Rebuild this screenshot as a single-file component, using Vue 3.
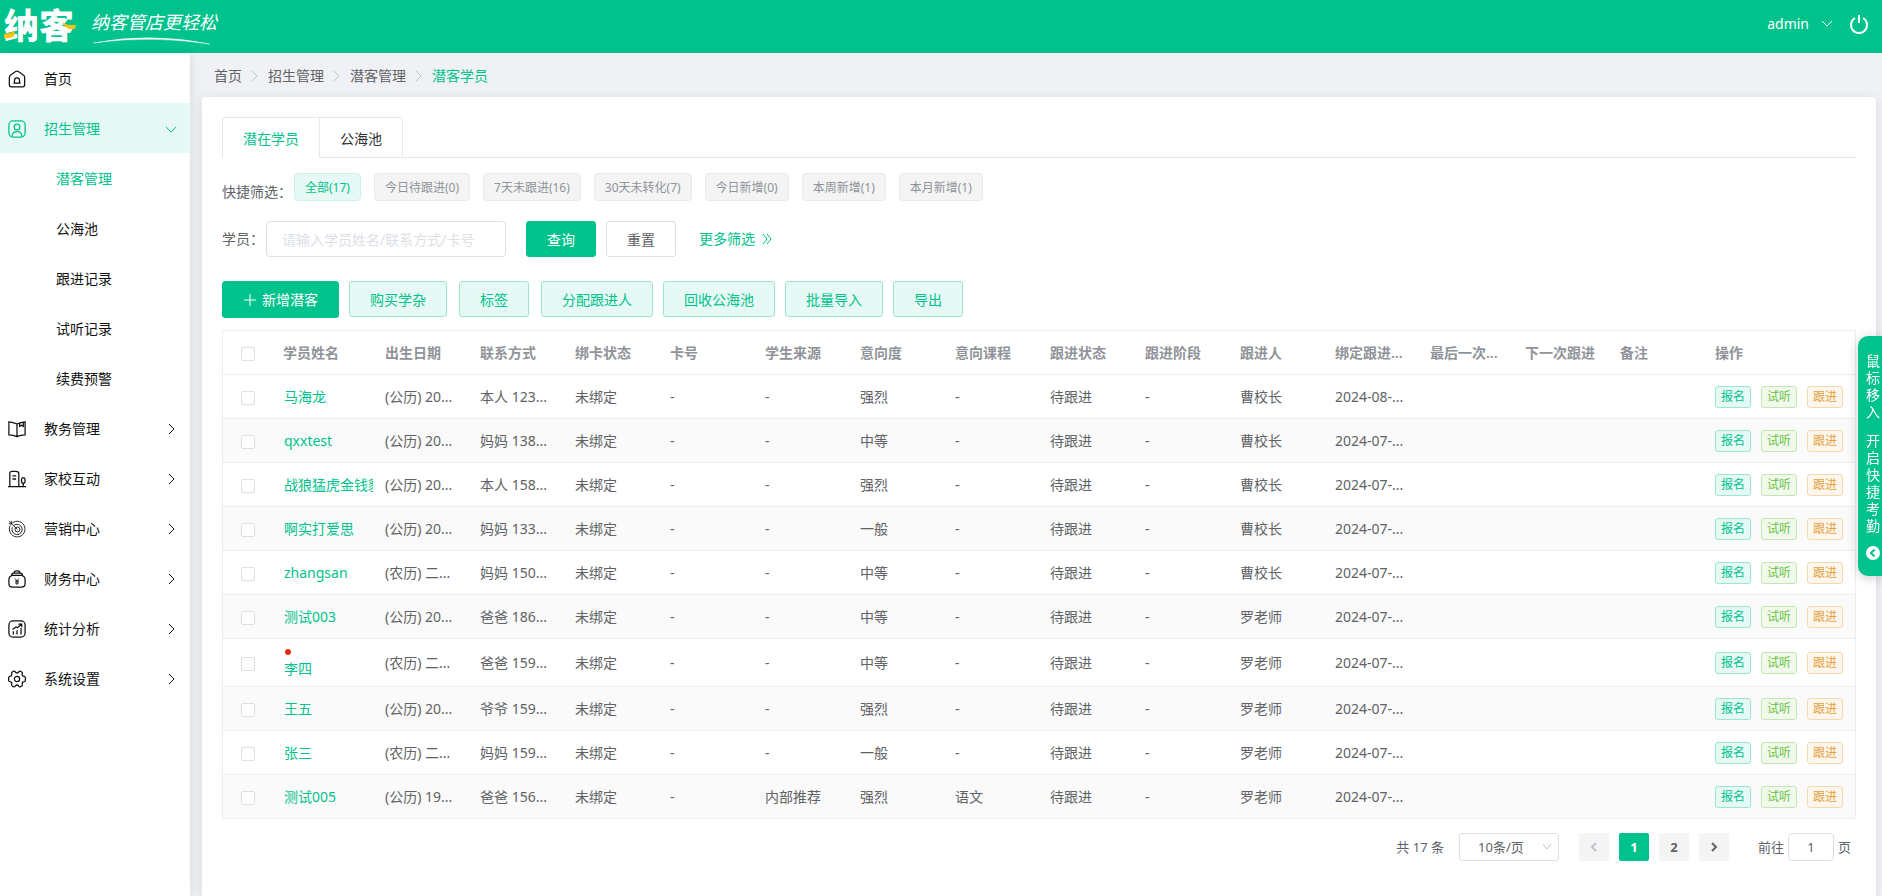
<script setup>
import { ref } from 'vue'

const subMenu = ['潜客管理', '公海池', '跟进记录', '试听记录', '续费预警']
const menu = [
  { label: '教务管理', icon: 'book' },
  { label: '家校互动', icon: 'school' },
  { label: '营销中心', icon: 'target' },
  { label: '财务中心', icon: 'finance' },
  { label: '统计分析', icon: 'chart' },
  { label: '系统设置', icon: 'gear' },
]
const crumbs = ['首页', '招生管理', '潜客管理', '潜客学员']
const quick = ['全部(17)', '今日待跟进(0)', '7天未跟进(16)', '30天未转化(7)', '今日新增(0)', '本周新增(1)', '本月新增(1)']
const activeQuick = ref(0)
const keyword = ref('')
const pageSize = ref('10条/页')
const jump = ref('1')

const heads = ['学员姓名', '出生日期', '联系方式', '绑卡状态', '卡号', '学生来源', '意向度', '意向课程', '跟进状态', '跟进阶段', '跟进人', '绑定跟进...', '最后一次...', '下一次跟进', '备注', '操作']
const make = (name, birth, contact, level, owner, date, extra = {}) => ({
  name, dot: extra.dot,
  cells: [birth, contact, '未绑定', '-', extra.source || '-', level, extra.course || '-', '待跟进', '-', owner, date, '', '', ''],
})
const rows = [
  make('马海龙', '(公历) 20...', '本人 123...', '强烈', '曹校长', '2024-08-...'),
  make('qxxtest', '(公历) 20...', '妈妈 138...', '中等', '曹校长', '2024-07-...'),
  make('战狼猛虎金钱豹', '(公历) 20...', '本人 158...', '强烈', '曹校长', '2024-07-...'),
  make('啊实打爱思', '(公历) 20...', '妈妈 133...', '一般', '曹校长', '2024-07-...'),
  make('zhangsan', '(农历) 二...', '妈妈 150...', '中等', '曹校长', '2024-07-...'),
  make('测试003', '(公历) 20...', '爸爸 186...', '中等', '罗老师', '2024-07-...'),
  make('李四', '(农历) 二...', '爸爸 159...', '中等', '罗老师', '2024-07-...', { dot: true }),
  make('王五', '(公历) 20...', '爷爷 159...', '强烈', '罗老师', '2024-07-...'),
  make('张三', '(农历) 二...', '妈妈 159...', '一般', '罗老师', '2024-07-...'),
  make('测试005', '(公历) 19...', '爸爸 156...', '强烈', '罗老师', '2024-07-...', { source: '内部推荐', course: '语文' }),
]
</script>

<template>
  <div class="app">
    <header class="top">
      <a class="logo" href="#">
        <span class="brand">纳客
          <svg class="accents" viewBox="0 0 72 30"><path d="M0 24q5 0 11-3l-1 5q-4 3-10 2z" /><path d="M58 12l6 3h8l-1 4h-6q-3-1-7-7z" /></svg>
        </span>
        <span class="slogan">纳客管店更轻松
          <svg class="swoosh" viewBox="0 0 118 8"><path d="M0 6Q58-5 117 7Q58-2 0 6z" /></svg>
        </span>
      </a>
      <div class="user">
        <button class="account">admin
          <svg width="12" height="8" viewBox="0 0 12 8"><path d="M1 1l5 5 5-5" /></svg>
        </button>
        <button class="power" aria-label="退出">
          <svg width="20" height="20" viewBox="0 0 20 20"><path d="M6 4a8 8 0 1 0 8 0M10 1v8" /></svg>
        </button>
      </div>
    </header>

    <div class="body">
      <aside class="side">
        <a class="item" href="#">
          <svg class="ico" viewBox="0 0 20 20"><path d="M1.500 8.200Q1.500 6.500 3 5.500L8.500 1.600Q10 .7 11.500 1.600L17 5.500Q18.500 6.500 18.500 8.200V16.500Q18.500 18.700 16.300 18.700H3.700Q1.500 18.700 1.500 16.500zM7.200 14.500V11.500a2.800 2.800 0 0 1 5.600 0V14.500zM6 14.500h8" /></svg>
          <span>首页</span>
        </a>
        <a class="item open" href="#">
          <svg class="ico" viewBox="0 0 20 20"><rect x="1" y="1" width="18" height="18" rx="4.500" /><circle cx="10" cy="7.800" r="3.200" /><path d="M4.500 18.500q0-5.500 5.500-5.500t5.500 5.500" /></svg>
          <span>招生管理</span>
          <svg class="arrow" viewBox="0 0 12 12"><path d="M1 4l5 5 5-5" /></svg>
        </a>
        <a v-for="(s, i) in subMenu" :key="s" class="item sub" :class="{ current: i === 0 }" href="#">{{ s }}</a>
        <a v-for="m in menu" :key="m.label" class="item" href="#">
          <svg class="ico" viewBox="0 0 20 20">
            <path v-if="m.icon === 'book'" d="M10 18.500V4.500Q6 2.200 1 2V16.500Q6 16.500 10 18.500Q14 16.500 19 16.500V2Q14 2.200 10 4.500M13 3v4l2-1.300L17 7V2.300" />
            <path v-else-if="m.icon === 'school'" d="M0 18.500h20M2 18.500V4q0-2.500 2.500-2.500H9Q12 1.500 12 4V18.500M5 6.500h4M5 10h4M17 18.500V15M17 8.500q2 0 2 3.200T17 15q-2 0-2-3.300T17 8.500z" />
            <g v-else-if="m.icon === 'target'" class="thin"><path d="M4.500 3.500A8.700 8.700 0 1 1 2.500 6M6.500 6A5.700 5.700 0 1 1 4.900 8M1 1.500l9.500 9M1 4l3 .5L3.500 1" /><circle cx="10.500" cy="10.500" r="2.700" /></g>
            <g v-else-if="m.icon === 'finance'"><path d="M5 6H15Q19 7 19 11V15q0 4-4 4H5q-4 0-4-4V11Q1 7 5 6zM4 6q0-2.600 2-2.600h8q2 0 2 2.600M7 3.400Q7 1 9 1h2q2 0 2 2.400" /><path class="thin" d="M7.800 9.500L10 12.200l2.200-2.700M10 12.200V16.500M7.800 12.500h4.400M7.800 14.500h4.400" /></g>
            <g v-else-if="m.icon === 'chart'"><rect x="1" y="1" width="18" height="18" rx="4.500" /><path d="M6 16v-3.500M10 16v-4.500M14.500 16V9M5 10.500l4-2.700 1.500.7L15 4.800M11.500 4.500H15.200V8" /></g>
            <g v-else><path d="M6.500 1.200Q8 1 8.300 2.500Q10 4.200 11.700 2.500Q12 1 13.500 1.200L15.600 2.500Q16.500 3.300 15.700 4.800Q15.800 7.200 18 7.200Q19.300 7.500 19.300 8.700V11.300Q19.300 12.500 18 12.800Q15.800 12.800 15.700 15.200Q16.500 16.700 15.600 17.500L13.500 18.800Q12 19 11.700 17.500Q10 15.800 8.300 17.500Q8 19 6.500 18.800L4.400 17.500Q3.500 16.700 4.300 15.200Q4.200 12.800 2 12.800Q.7 12.500 .7 11.300V8.700Q.7 7.500 2 7.200Q4.200 7.200 4.300 4.800Q3.500 3.300 4.400 2.500z" /><circle cx="10" cy="10" r="2.900" /></g>
          </svg>
          <span>{{ m.label }}</span>
          <svg class="arrow" viewBox="0 0 12 12"><path d="M4 1l5 5-5 5" /></svg>
        </a>
      </aside>

      <main class="main">
        <nav class="crumbs">
          <template v-for="(c, i) in crumbs" :key="c">
            <svg v-if="i" class="sep" viewBox="0 0 8 12"><path d="M1 1l5 5-5 5" /></svg>
            <a href="#" :class="{ current: i === 3 }">{{ c }}</a>
          </template>
        </nav>

        <section class="card">
          <div class="tabs">
            <button class="tab active">潜在学员</button>
            <button class="tab">公海池</button>
          </div>

          <div class="quick">
            <span class="quick-label">快捷筛选：</span>
            <div class="quick-list">
              <button v-for="(q, i) in quick" :key="q" class="chip" :class="{ on: i === activeQuick }" @click="activeQuick = i">{{ q }}</button>
            </div>
          </div>

          <form class="search" @submit.prevent>
            <label for="kw">学员：</label>
            <input id="kw" v-model="keyword" class="text" placeholder="请输入学员姓名/联系方式/卡号" />
            <button class="btn primary">查询</button>
            <button class="btn" type="reset">重置</button>
            <a class="more" href="#">更多筛选
              <svg width="10" height="12" viewBox="0 0 10 12"><path d="M1 1l4 5-4 5M5 1l4 5-4 5" /></svg>
            </a>
          </form>

          <div class="actions">
            <button class="btn primary add"><svg width="12" height="12" viewBox="0 0 12 12"><path d="M6 0v12M0 6h12" /></svg>新增潜客</button>
            <button class="btn plain">购买学杂</button>
            <span class="group">
              <button class="btn plain">标签</button>
            </span>
            <button class="btn plain">分配跟进人</button>
            <button class="btn plain">回收公海池</button>
            <button class="btn plain">批量导入</button>
            <button class="btn plain">导出</button>
          </div>

          <table class="grid">
            <colgroup>
              <col class="c-check" /><col class="c-name" />
              <col v-for="n in 14" :key="n" />
              <col class="c-ops" />
            </colgroup>
            <thead>
              <tr>
                <th class="check"><input type="checkbox" aria-label="全选" /></th>
                <th v-for="h in heads" :key="h">{{ h }}</th>
              </tr>
            </thead>
            <tbody>
              <tr v-for="r in rows" :key="r.name">
                <td class="check"><input type="checkbox" :aria-label="r.name" /></td>
                <td class="name"><i v-if="r.dot" class="dot"></i><a href="#">{{ r.name }}</a></td>
                <td v-for="(c, i) in r.cells" :key="i">{{ c }}</td>
                <td>
                  <div class="ops">
                    <button class="tag green">报名</button>
                    <button class="tag lime">试听</button>
                    <button class="tag amber">跟进</button>
                  </div>
                </td>
              </tr>
            </tbody>
          </table>

          <div class="pager">
            <span class="total">共 17 条</span>
            <span class="size">
              <select v-model="pageSize" aria-label="每页条数"><option>10条/页</option></select>
              <svg width="10" height="8" viewBox="0 0 10 8"><path d="M1 1l4 5 4-5" /></svg>
            </span>
            <button class="pg" disabled aria-label="上一页"><svg width="8" height="12" viewBox="0 0 8 12"><path d="M6 2L2 6l4 4" /></svg></button>
            <button class="pg now">1</button>
            <button class="pg">2</button>
            <button class="pg" aria-label="下一页"><svg width="8" height="12" viewBox="0 0 8 12"><path d="M2 2l4 4-4 4" /></svg></button>
            <label class="jump">前往<input v-model="jump" />页</label>
          </div>
        </section>
      </main>
    </div>

    <button class="dock">
      <span>鼠标移入</span>
      <span>开启快捷考勤</span>
      <svg width="14" height="14" viewBox="0 0 14 14"><circle cx="7" cy="7" r="7" /><path d="M8.500 3.500L5 7l3.500 3.500" /></svg>
    </button>
  </div>
</template>

<style>
body {
  margin: 0;
  background: #f0f1f5;
}
</style>

<style scoped>
.app {
  min-height: 100vh;
  display: flex;
  flex-direction: column;
  font: 14px/20px "Noto Sans", "Noto Sans CJK SC", sans-serif;
  color: #606266;
}
* { box-sizing: border-box; }
a { color: inherit; text-decoration: none; }
button, input, select { font: inherit; color: inherit; margin: 0; }
button { cursor: pointer; border: 0; background: none; padding: 0; white-space: nowrap; }
svg { fill: none; stroke: currentColor; flex: none; }

.top {
  height: 53px;
  display: flex;
  align-items: center;
  justify-content: space-between;
  padding: 0 13px 5px 4px;
  background: #00c28c;
  color: #fff;
}
.logo { display: flex; align-items: center; gap: 15px; }
.brand {
  position: relative;
  font: 900 35px/46px "Noto Sans CJK SC", sans-serif;
  padding-right: 2px;
}
.accents { position: absolute; left: 0; top: 9px; width: 72px; height: 30px; fill: #fdc30c; stroke: none; }
.slogan {
  position: relative;
  font: italic 400 18px/26px "Noto Sans CJK SC", sans-serif;
  padding-bottom: 6px;
}
.swoosh { position: absolute; left: 2px; bottom: -5px; width: 118px; height: 8px; fill: #fff; stroke: #fff; stroke-width: 0.4; }
.user { display: flex; align-items: center; gap: 16px; }
.account { display: flex; align-items: center; gap: 12px; height: 24px; }
.power { display: flex; }
.power svg { stroke-width: 2; }

.body { flex: 1; display: flex; }
.side {
  flex: none;
  width: 190px;
  background: #fff;
  box-shadow: 2px 0 8px rgba(0, 0, 0, 0.08);
  color: #111;
}
.item {
  display: flex;
  align-items: center;
  height: 50px;
  padding: 2px 13px 0 8px;
}
.item .ico { width: 18px; height: 18px; margin-right: 18px; stroke-width: 1.4; }
.item .thin { stroke-width: 1; }
.item .arrow { width: 12px; height: 12px; margin-left: auto; }
.item.open { background: #e6f9f4; color: #00c28c; }
.item.sub { padding-left: 56px; }
.item.sub.current { color: #00c28c; }

.main {
  flex: 1;
  min-width: 0;
  display: flex;
  flex-direction: column;
  padding: 0 6px 0 12px;
}
.crumbs {
  display: flex;
  align-items: center;
  height: 44px;
  padding: 2px 12px 0;
}
.crumbs .sep { width: 8px; height: 12px; margin: 0 9px; color: #c0c4cc; }
.crumbs .current { color: #00c28c; }

.card {
  flex: 1;
  padding: 20px 20px 34px;
  background: #fff;
  border-radius: 4px 4px 0 0;
  box-shadow: 0 2px 12px rgba(0, 0, 0, 0.1);
}
.tabs { display: flex; border-bottom: 1px solid #e4e7ed; }
.tab {
  height: 40px;
  padding: 2px 20px 0;
  border-top: 1px solid #e4e7ed;
  border-right: 1px solid #e4e7ed;
  border-top-right-radius: 4px;
  color: #303133;
}
.tab.active {
  border-left: 1px solid #e4e7ed;
  border-radius: 4px 0 0 0;
  margin-bottom: -1px;
  height: 41px;
  background: #fff;
  color: #00c28c;
}

.quick { display: flex; margin-top: 15px; }
.quick-label { padding-top: 9px; width: 72px; }
.quick-list { display: flex; flex-wrap: wrap; gap: 13px; height: 28px; }
.chip {
  height: 28px;
  padding: 1px 10px 0;
  border: 1px solid #e9e9eb;
  border-radius: 4px;
  background: #f4f4f5;
  color: #909399;
  font-size: 12px;
}
.chip.on { background: #e6f9f4; border-color: #ccf3e8; color: #00c28c; }

.search { display: flex; align-items: center; margin-top: 19px; }
.search label { width: 44px; }
.text {
  width: 240px;
  height: 36px;
  margin-right: 20px;
  padding: 0 15px;
  border: 1px solid #dcdfe6;
  border-radius: 4px;
  background: #fff;
  outline: 0;
}
.text::placeholder { color: #dcdfe6; opacity: 1; }
.btn {
  height: 36px;
  padding: 1px 20px 0;
  border: 1px solid #dcdfe6;
  border-radius: 3px;
  background: #fff;
}
.btn.primary { background: #00c28c; border-color: #00c28c; color: #fff; }
.btn.plain { background: #e6f9f4; border-color: #99e7d1; color: #00c28c; }
.search .btn { margin-right: 10px; }
.more { display: flex; align-items: center; gap: 7px; margin-left: 13px; color: #00c28c; }

.actions { display: flex; gap: 10px; margin-top: 24px; }
.actions .add { display: flex; align-items: center; gap: 6px; height: 37px; padding-left: 21px; }
.group { padding: 0 2px; }

.grid {
  width: 100%;
  margin-top: 12px;
  table-layout: fixed;
  border-collapse: separate;
  border-spacing: 0;
  border: 1px solid #ebeef5;
  border-bottom: 0;
}
.c-check { width: 50px; }
.c-name { width: 102px; }
.c-ops { width: 150px; }
th, td {
  height: 44px;
  padding: 7px 0 7px 10px;
  border-bottom: 1px solid #ebeef5;
  text-align: left;
  white-space: nowrap;
  overflow: hidden;
}
th { color: #909399; font-weight: 600; }
tbody tr:nth-child(even) { background: #fafafa; }
.check { padding: 2px 0 0 18px; }
.check input {
  display: block;
  appearance: none;
  width: 14px;
  height: 14px;
  border: 1px solid #dcdfe6;
  border-radius: 2px;
  background: #fff;
}
.name { padding-left: 11px; color: #00c28c; }
.name a { display: block; overflow: hidden; margin-right: 2px; }
.dot { display: block; width: 6px; height: 6px; margin: 3px 0 4px 1px; border-radius: 50%; background: #e6320f; }
.ops { display: flex; gap: 10px; }
.tag {
  height: 22px;
  padding: 0 5px;
  border: 1px solid;
  border-radius: 3px;
  font-size: 12px;
  line-height: 20px;
}
.tag.green { color: #00c28c; background: #e6f9f4; border-color: #99e7d1; }
.tag.lime { color: #67c23a; background: #f0f9eb; border-color: #c2e7b0; }
.tag.amber { color: #e6a23c; background: #fdf6ec; border-color: #f5dab1; }

.pager {
  display: flex;
  align-items: center;
  justify-content: flex-end;
  gap: 10px;
  margin-top: 14px;
  padding-right: 5px;
  font-size: 13px;
}
.total { margin-right: 5px; }
.size { position: relative; display: flex; margin-right: 10px; }
.size select {
  width: 100px;
  height: 28px;
  padding: 0 16px 0 0;
  border: 1px solid #dcdfe6;
  border-radius: 3px;
  background: #fff;
  appearance: none;
  text-align: center;
  text-align-last: center;
}
.size svg { position: absolute; right: 7px; top: 10px; color: #c0c4cc; pointer-events: none; }
.pg {
  display: flex;
  align-items: center;
  justify-content: center;
  width: 30px;
  height: 28px;
  border-radius: 2px;
  background: #f4f4f5;
  font-weight: 700;
}
.pg svg { stroke-width: 2; }
.pg[disabled] { color: #c0c4cc; }
.pg.now { background: #00c28c; color: #fff; }
.jump { display: flex; align-items: center; gap: 4px; margin-left: 19px; }
.jump input {
  width: 46px;
  height: 28px;
  padding: 0;
  border: 1px solid #dcdfe6;
  border-radius: 4px;
  text-align: center;
}

.dock {
  position: fixed;
  right: 0;
  top: 336px;
  width: 24px;
  height: 240px;
  padding: 16px 2px 18px 8px;
  display: flex;
  flex-direction: column;
  gap: 12px;
  border-radius: 10px 0 0 10px;
  background: #00c28c;
  color: #fff;
  line-height: 17px;
  white-space: normal;
  word-break: break-all;
  box-shadow: 0 2px 12px rgba(0, 0, 0, 0.2);
}
.dock svg { fill: #fff; stroke: #00c28c; stroke-width: 2; }
.dock circle { stroke: none; }
.dock path { fill: none; }
</style>
